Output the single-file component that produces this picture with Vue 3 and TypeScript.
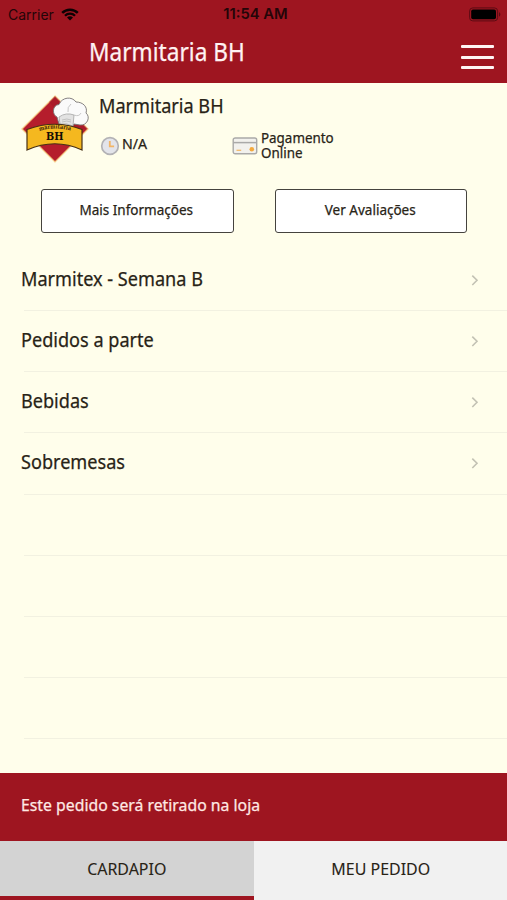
<script setup lang="ts">
interface MenuRow {
  label: string
}

const rows: MenuRow[] = [
  { label: 'Marmitex - Semana B' },
  { label: 'Pedidos a parte' },
  { label: 'Bebidas' },
  { label: 'Sobremesas' },
  { label: '' },
  { label: '' },
  { label: '' },
  { label: '' },
]
</script>

<template>
  <div class="screen">
    <header class="top">
      <div class="status">
        <div class="carrier">
          <span>Carrier</span>
          <svg class="wifi" width="18" height="13" viewBox="0 0 18 13" fill="none" stroke="#0b0203">
            <path d="M1.2 4.9a11 11 0 0 1 15.6 0" stroke-width="2.5" />
            <path d="M4 7.8a7 7 0 0 1 10 0" stroke-width="2.3" />
            <path d="M9 12.4 6 9.6a4.3 4.3 0 0 1 6 0Z" fill="#0b0203" stroke="none" />
          </svg>
        </div>
        <span class="time">11:54 AM</span>
        <svg class="battery" width="32" height="15" viewBox="0 0 32 15">
          <rect x=".6" y=".9" width="28" height="13" rx="3.2" fill="none" stroke="#5c0b13" stroke-width="1" />
          <rect x="2.2" y="2.5" width="24.8" height="9.8" rx="1.8" fill="#000" />
          <path d="M30 5.3c1.8.5 1.8 3.7 0 4.2Z" fill="#5c0b13" />
        </svg>
      </div>
      <div class="bar">
        <h1 class="t title">Marmitaria BH</h1>
        <button class="burger" aria-label="Menu"><i></i><i></i><i></i></button>
      </div>
    </header>

    <section class="store">
      <svg class="logo" width="72" height="72" viewBox="0 0 72 72">
        <path d="M36 3 69 36 36 69 3 36Z" fill="#b51d2c" stroke="#f4c883" stroke-width="1.2" />
        <path d="M36 3 69 36 55 36 30 9Z" fill="#9f1a28" opacity=".5" />
        <path d="M40 31 38 24C33 22 33 12 40 11.5C43 4 53 3 57 9C64 9 69 14 67 20C72 24 68 33 61 32L55 31L53 34Z" fill="#fafafa" stroke="#777373" stroke-width=".9" />
        <path d="M40 24q7-5 15-2l-1 11q-6-3-13-2Z" fill="#e2e2e2" stroke="#999" stroke-width=".7" />
        <path d="M43 27q5-2 9 0m-9 2q5-2 9 0M49 19q-1-5 3-8m3 11q5 2 7-2" fill="none" stroke="#b9b9b9" stroke-width=".8" />
        <path d="M8 36.5Q36 26 63 36.5V57Q36 44.5 8 57Z" fill="#f5b81f" stroke="#473015" stroke-width="1.2" />
        <path id="arc" d="M20.5 38Q36 33 53 38" fill="none" />
        <text class="logo-small"><textPath href="#arc" textLength="31.5" lengthAdjust="spacingAndGlyphs">marmitaria</textPath></text>
        <text class="logo-big" x="27" y="46.8" textLength="17.5" lengthAdjust="spacingAndGlyphs">BH</text>
      </svg>
      <div class="info">
        <h2 class="t name">Marmitaria BH</h2>
        <div class="facts">
          <div class="fact wait">
            <svg width="20" height="20" viewBox="0 0 20 20">
              <circle cx="10" cy="10" r="8.3" fill="#e3e4ea" stroke="#b3b2b5" stroke-width="1.7" />
              <path d="M9.8 5v5.4h4.3" fill="none" stroke="#f3b565" stroke-width="1.8" />
            </svg>
            <span class="t">N/A</span>
          </div>
          <div class="fact pay">
            <svg width="26" height="18" viewBox="0 0 26 18">
              <rect x="1.2" y="1" width="23.5" height="15.8" rx="2" fill="#f2f1ed" stroke="#aaa9a8" stroke-width="1.4" />
              <path d="M1.2 5.6h23.5" stroke="#aaa9a8" stroke-width="1.5" />
              <path d="M4.5 13.3h4.7" stroke="#f3b969" stroke-width="1.3" />
              <circle cx="19.8" cy="12.2" r="2.3" fill="#f4aa3e" />
            </svg>
            <span class="t">Pagamento<br />Online</span>
          </div>
        </div>
      </div>
    </section>

    <div class="actions">
      <button class="action"><span class="t">Mais Informações</span></button>
      <button class="action"><span class="t">Ver Avaliações</span></button>
    </div>

    <ul class="list">
      <li v-for="(row, i) in rows" :key="i" class="row">
        <template v-if="row.label">
          <span class="t label">{{ row.label }}</span>
          <svg width="8" height="12" viewBox="0 0 8 12">
            <path d="M1.3 1.6 6 6.3 1.3 11" fill="none" stroke="#c3c2b4" stroke-width="1.6" />
          </svg>
        </template>
      </li>
    </ul>

    <div class="notice"><span class="t">Este pedido será retirado na loja</span></div>
    <nav class="tabs">
      <button class="tab active"><span class="t">CARDAPIO</span></button>
      <button class="tab"><span class="t">MEU PEDIDO</span></button>
    </nav>
  </div>
</template>

<style>
body {
  margin: 0;
  overflow: hidden;
}
</style>

<style scoped>
.screen {
  --sx: 0.924;
  width: 507px;
  height: 900px;
  display: flex;
  flex-direction: column;
  background: #fffeeb;
  color: #282316;
  font-family: "Noto Sans", "Open Sans", sans-serif;
  overflow: hidden;
}
button {
  padding: 0;
  border: 0;
  background: none;
  font: inherit;
  color: inherit;
}
h1, h2, ul {
  margin: 0;
  padding: 0;
  list-style: none;
}
.t {
  display: block;
  font-weight: 400;
  -webkit-text-stroke: 0.25px currentColor;
  white-space: nowrap;
  transform: scaleX(var(--sx));
  transform-origin: left center;
}
.top {
  height: 82.5px;
  flex: none;
  background: #9e1520;
}
.status {
  height: 27px;
  display: grid;
  grid-template-columns: 1fr auto 1fr;
  align-items: center;
  padding: 0 6px 0 8px;
  font: 14px/27px Inter, sans-serif;
  color: #240508;
}
.carrier {
  display: flex;
  align-items: center;
  gap: 7px;
}
.time {
  padding: 1px 0 0 2px;
  font-weight: 600;
  font-size: 14.8px;
}
.battery {
  justify-self: end;
}
.bar {
  height: 55px;
  display: flex;
  justify-content: space-between;
  padding: 0 13px 0 89px;
}
.title {
  font-size: 24.5px;
  line-height: 50px;
  color: #fff2f2;
}
.burger {
  display: flex;
  flex-direction: column;
  gap: 7.7px;
  width: 33px;
  padding-top: 18px;
}
.burger i {
  height: 3px;
  flex: none;
  border-radius: 1px;
  background: #fff5f5;
}
.store {
  height: 106px;
  flex: none;
  display: flex;
  box-sizing: border-box;
  padding: 10px 0 0 19px;
  gap: 8px;
}
.logo {
  flex: none;
}
.logo-small {
  font: bold 6px "DejaVu Serif", serif;
  fill: #3c260b;
}
.logo-big {
  font: bold 10.5px "DejaVu Serif", serif;
  fill: #130d05;
}
.name {
  font-size: 19.6px;
  line-height: 25px;
}
.facts {
  display: flex;
  font-size: 14.5px;
  line-height: 15px;
  padding-top: 12.5px;
}
.fact {
  display: flex;
}
.wait {
  width: 132px;
  gap: 2px;
  padding: 5.5px 0 0 1px;
  box-sizing: border-box;
}
.wait .t {
  --sx: 0.98;
}
.pay {
  gap: 3px;
}
.pay svg {
  margin: 6.5px 0 0 1px;
}
.actions {
  height: 61.5px;
  flex: none;
  display: flex;
  gap: 41px;
  padding-left: 41px;
}
.action {
  width: 192.5px;
  height: 44px;
  box-sizing: border-box;
  border: 1.5px solid #45433e;
  border-radius: 3px;
  background: #fff;
  font-size: 14.3px;
  line-height: 40px;
}
.action .t {
  --sx: 0.945;
  margin: -2px 2px 0 0;
}
.action .t,
.tab .t {
  transform-origin: center;
}
.list {
  flex: 1;
}
.row {
  height: 61.15px;
  box-sizing: border-box;
  display: flex;
  justify-content: space-between;
  align-items: center;
  margin-left: 24px;
  padding-right: 28px;
  border-bottom: 1px solid #f2f1e1;
}
.label {
  margin-left: -3.5px;
  font-size: 19.6px;
  line-height: 58px;
  padding-bottom: 3px;
}
.notice {
  --sx: 0.957;
  height: 68.5px;
  flex: none;
  padding-left: 20.5px;
  background: #9e1520;
  color: #ffe9e4;
  font-size: 16.5px;
  line-height: 64px;
}
.tabs {
  --sx: 0.95;
  height: 59px;
  flex: none;
  display: flex;
}
.tab {
  flex: 1;
  box-sizing: border-box;
  background: #f1f1f1;
  font-size: 16.8px;
  line-height: 55px;
  border-bottom: 4px solid transparent;
}
.tab .t {
  -webkit-text-stroke-width: 0.1px;
}
.tab.active {
  background: #d3d3d3;
  border-bottom-color: #9e1520;
}
</style>
